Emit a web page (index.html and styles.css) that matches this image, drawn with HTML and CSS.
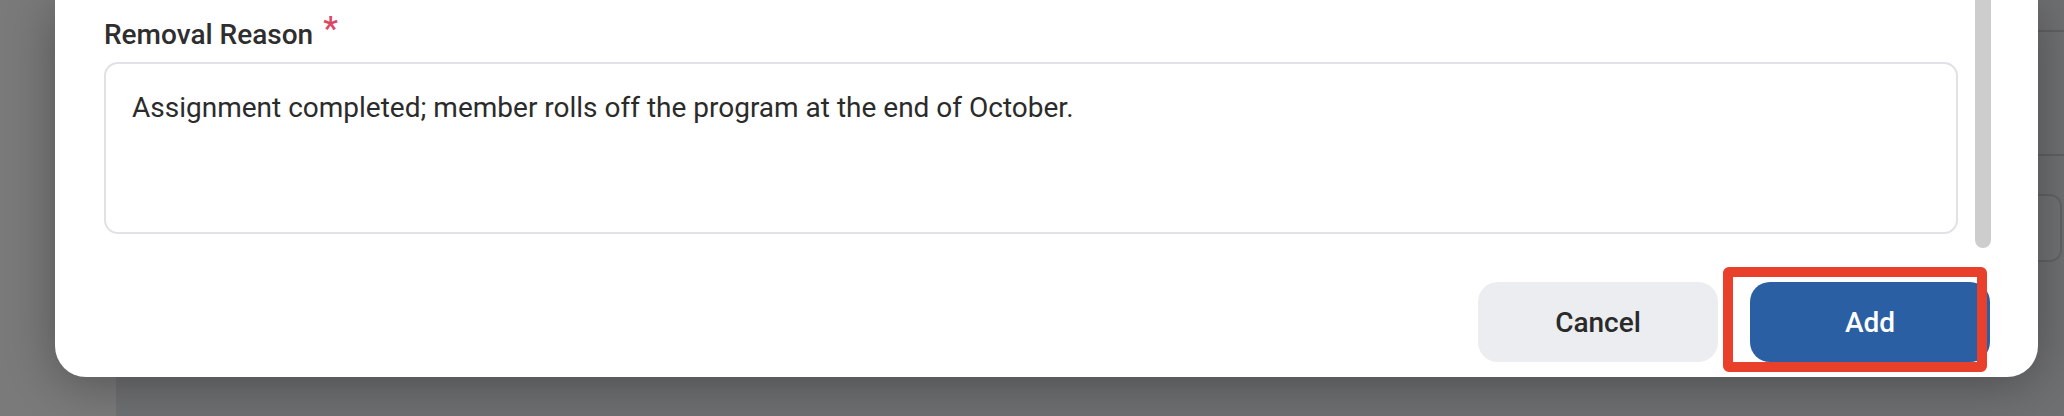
FILE: index.html
```html
<!DOCTYPE html>
<html lang="en">
<head>
<meta charset="utf-8">
<title>Remove member</title>
<link rel="stylesheet" href="styles.css">
</head>
<body>
<div class="stage">
  <div class="page">
    <aside class="sidebar"></aside>
    <main class="main">
      <div class="row row-head"></div>
      <div class="row row-body"></div>
      <div class="pager">
        <button class="pager-btn" type="button"><span class="caret">&#9656;</span></button>
      </div>
    </main>
  </div>
  <div class="scrim"></div>
  <div class="dialog-layer">
    <section class="dialog" role="dialog" aria-label="Remove member">
      <div class="dialog-body">
        <div class="form">
          <label class="field-label" for="reason">Removal Reason <span class="req">*</span></label>
          <textarea id="reason" class="field-input">Assignment completed; member rolls off the program at the end of October.</textarea>
        </div>
        <div class="scrollbar"><div class="thumb"></div></div>
      </div>
      <footer class="dialog-footer">
        <button class="btn btn-secondary" type="button">Cancel</button>
        <div class="highlight-wrap">
          <button class="btn btn-primary" type="button">Add</button>
          <span class="highlight"></span>
        </div>
      </footer>
    </section>
  </div>
</div>
</body>
</html>
```

FILE: styles.css
```css
* { box-sizing: border-box; }

html, body {
  margin: 0;
  padding: 0;
}

body {
  width: 2064px;
  height: 416px;
  overflow: hidden;
  font-family: Roboto, "Liberation Sans", Arial, sans-serif;
  background: #ffffff;
}

.stage {
  display: grid;
  grid-template-columns: 1fr;
  grid-template-rows: 416px;
  overflow: hidden;
}

.stage > * {
  grid-area: 1 / 1;
}

/* underlying page */
.page {
  display: grid;
  grid-template-columns: 116px 1fr;
}

.sidebar {
  background: #ffffff;
}

.main {
  background: #e9eaec;
  display: flex;
  flex-direction: column;
}

.row {
  border-bottom: 2px solid #c9cbcf;
}

.row-head { height: 32px; }
.row-body { height: 124px; }

.pager {
  display: flex;
  justify-content: flex-end;
  padding: 38px 2px 0 0;
}

.pager-btn {
  width: 70px;
  height: 68px;
  border: 2px solid #cdd0d4;
  border-radius: 12px;
  background: #eceef0;
  display: flex;
  align-items: center;
  justify-content: flex-start;
  padding: 0 0 0 18px;
  font-size: 20px;
  color: #000;
}

.caret {
  line-height: 1;
}

.scrim {
  background: rgba(0, 0, 0, 0.52);
}

/* dialog */
.dialog-layer {
  padding-left: 55px;
}

.dialog {
  width: 1983px;
  height: 377px;
  background: #ffffff;
  border-radius: 0 0 31px 31px;
  box-shadow: 0 6px 50px rgba(0, 0, 0, 0.32);
  display: flex;
  flex-direction: column;
}

.dialog-body {
  height: 248px;
  display: flex;
  padding: 0 47px 0 49px;
}

.form {
  flex: 1;
  padding: 19px 17px 0 0;
  display: flex;
  flex-direction: column;
}

.field-label {
  display: block;
  height: 32px;
  font-size: 28px;
  line-height: 32px;
  font-weight: 500;
  color: #2e2e2e;
}

.req {
  color: #dc4766;
  font-weight: 500;
  font-size: 33px;
  line-height: 0;
  vertical-align: 4px;
  margin-left: 3px;
}

.field-input {
  display: block;
  margin-top: 11px;
  width: 100%;
  height: 172px;
  border: 2px solid #e1e1e6;
  border-radius: 14px;
  padding: 26px 26px 20px;
  font-family: Roboto, "Liberation Sans", Arial, sans-serif;
  font-size: 28px;
  line-height: 36px;
  color: #2b2b2b;
  background: #fff;
  resize: none;
  overflow: hidden;
  outline: none;
}

.scrollbar {
  width: 16px;
  display: flex;
}

.thumb {
  flex: 1;
  background: #cdcdcd;
  border-radius: 0 0 8px 8px;
}

.dialog-footer {
  display: flex;
  justify-content: flex-end;
  gap: 32px;
  padding: 34px 48px 15px 0;
}

.btn {
  width: 240px;
  height: 80px;
  border: none;
  border-radius: 20px;
  font-family: Roboto, "Liberation Sans", Arial, sans-serif;
  font-size: 28px;
  font-weight: 500;
  cursor: pointer;
}

.btn-secondary {
  background: #ecedf0;
  color: #2a2a2a;
}

.btn-primary {
  background: #2a5fa4;
  color: #ffffff;
}

.highlight-wrap {
  position: relative;
  display: flex;
}

.highlight {
  position: absolute;
  left: -27px;
  top: -15px;
  width: 264px;
  height: 105px;
  border: 10px solid #e8402a;
  border-radius: 6px;
  pointer-events: none;
}
```
